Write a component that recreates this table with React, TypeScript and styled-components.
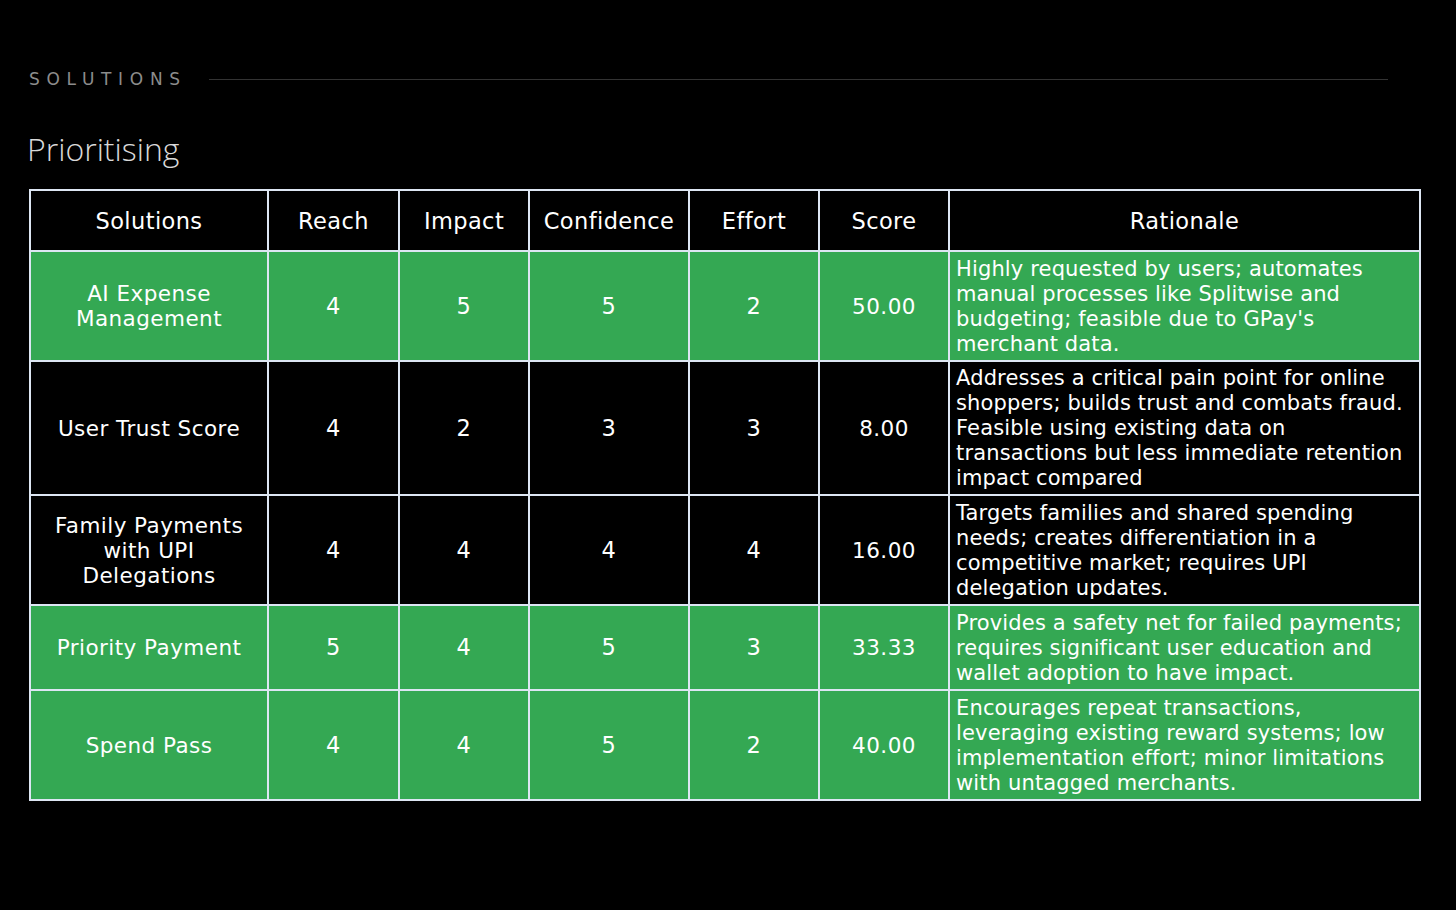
import React from "react";
import styled, { createGlobalStyle } from "styled-components";

const Global = createGlobalStyle`
  html, body { margin: 0; padding: 0; background: #000; }
  body { font-family: "DejaVu Sans", "Open Sans", sans-serif; color: #fff; }
`;

const Page = styled.div`
  width: 1456px;
  height: 910px;
  background: #000;
  padding: 68px 0 0 29px;
  box-sizing: border-box;
`;

const Eyebrow = styled.div`
  display: flex;
  align-items: center;
  gap: 22px;
  width: 1359px;
`;

const EyebrowLabel = styled.span`
  font-size: 17px;
  letter-spacing: 6.7px;
  color: #8c8c8c;
  line-height: 22px;
`;

const Rule = styled.div`
  flex: 1;
  height: 1px;
  background: #333;
`;

const Title = styled.h2`
  margin: 40px 0 21px -2px;
  font-size: 32px;
  font-weight: 300;
  font-family: "Open Sans", "DejaVu Sans", sans-serif;
  color: #d9d9d9;
  line-height: 38px;
`;

const Table = styled.table`
  border-collapse: collapse;
  table-layout: fixed;
  width: 1392px;
  border: 2px solid #dde6f3;
`;

const Th = styled.th`
  border: 2px solid #dde6f3;
  background: #000;
  font-weight: 400;
  font-size: 22.5px;
  letter-spacing: 0.4px;
  height: 59px;
  padding: 0;
  text-align: center;
  color: #fff;
`;

const Tr = styled.tr<{ $green: boolean }>`
  background: ${(p) => (p.$green ? "#34a853" : "#000")};
`;

const Td = styled.td<{ $left?: boolean }>`
  border: 2px solid #dde6f3;
  font-size: ${(p) => (p.$left ? "21px" : "21.5px")};
  letter-spacing: ${(p) => (p.$left ? "0.15px" : "0.45px")};
  line-height: 25px;
  padding: ${(p) => (p.$left ? "3px 4px 2px 6px" : "0 4px")};
  text-align: ${(p) => (p.$left ? "left" : "center")};
  vertical-align: middle;
  color: #fff;
  white-space: nowrap;
`;

const Num = styled.span`
  font-size: 22.5px;
`;

type Row = {
  name: string[];
  vals: string[];
  score: string;
  why: string[];
  green: boolean;
  h: number;
};

const rows: Row[] = [
  {
    name: ["AI Expense", "Management"],
    vals: ["4", "5", "5", "2"],
    score: "50.00",
    why: [
      "Highly requested by users; automates",
      "manual processes like Splitwise and",
      "budgeting; feasible due to GPay's",
      "merchant data.",
    ],
    green: true,
    h: 110,
  },
  {
    name: ["User Trust Score"],
    vals: ["4", "2", "3", "3"],
    score: "8.00",
    why: [
      "Addresses a critical pain point for online",
      "shoppers; builds trust and combats fraud.",
      "Feasible using existing data on",
      "transactions but less immediate retention",
      "impact compared",
    ],
    green: false,
    h: 134,
  },
  {
    name: ["Family Payments", "with UPI", "Delegations"],
    vals: ["4", "4", "4", "4"],
    score: "16.00",
    why: [
      "Targets families and shared spending",
      "needs; creates differentiation in a",
      "competitive market; requires UPI",
      "delegation updates.",
    ],
    green: false,
    h: 110,
  },
  {
    name: ["Priority Payment"],
    vals: ["5", "4", "5", "3"],
    score: "33.33",
    why: [
      "Provides a safety net for failed payments;",
      "requires significant user education and",
      "wallet adoption to have impact.",
    ],
    green: true,
    h: 85,
  },
  {
    name: ["Spend Pass"],
    vals: ["4", "4", "5", "2"],
    score: "40.00",
    why: [
      "Encourages repeat transactions,",
      "leveraging existing reward systems; low",
      "implementation effort; minor limitations",
      "with untagged merchants.",
    ],
    green: true,
    h: 110,
  },
];

const cols = [238, 131, 130, 160, 130, 130, 471];
const heads = ["Solutions", "Reach", "Impact", "Confidence", "Effort", "Score", "Rationale"];

const Lines = ({ lines }: { lines: string[] }) => (
  <>
    {lines.map((l, i) => (
      <React.Fragment key={i}>
        {i > 0 && <br />}
        {l}
      </React.Fragment>
    ))}
  </>
);

export default function App() {
  return (
    <>
      <Global />
      <Page>
        <Eyebrow>
          <EyebrowLabel>SOLUTIONS</EyebrowLabel>
          <Rule />
        </Eyebrow>
        <Title>Prioritising</Title>
        <Table>
          <colgroup>
            {cols.map((w, i) => (
              <col key={i} style={{ width: w }} />
            ))}
          </colgroup>
          <thead>
            <tr>
              {heads.map((h) => (
                <Th key={h}>{h}</Th>
              ))}
            </tr>
          </thead>
          <tbody>
            {rows.map((r, i) => (
              <Tr key={i} $green={r.green} style={{ height: r.h }}>
                <Td>
                  <Lines lines={r.name} />
                </Td>
                {r.vals.map((v, j) => (
                  <Td key={j}>
                    <Num>{v}</Num>
                  </Td>
                ))}
                <Td>{r.score}</Td>
                <Td $left>
                  <Lines lines={r.why} />
                </Td>
              </Tr>
            ))}
          </tbody>
        </Table>
      </Page>
    </>
  );
}
